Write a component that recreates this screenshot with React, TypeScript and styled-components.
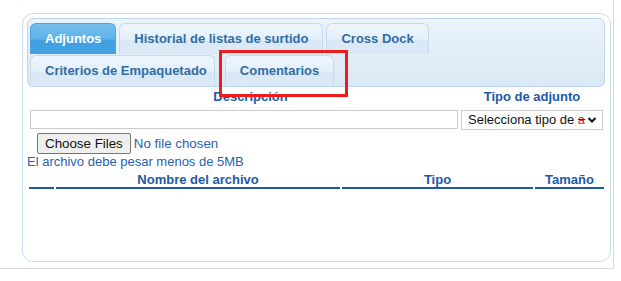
import styled, { createGlobalStyle } from 'styled-components';

const GlobalStyle = createGlobalStyle`
  body {
    margin: 0;
    font-family: 'Liberation Sans', Arial, sans-serif;
    background: #ffffff;
  }
`;

const Page = styled.div`
  position: relative;
  box-sizing: border-box;
  width: 614px;
  height: 269px;
  padding: 13px 2px 0 22px;
  border-right: 1px solid #dcdcdc;
  border-bottom: 1px solid #dcdcdc;
`;

const Panel = styled.div`
  box-sizing: border-box;
  height: 249px;
  padding: 4px 5px 4px 4px;
  border: 1px solid #c9ddf1;
  border-radius: 11px;
  background: #ffffff;
`;

const TabNav = styled.ul`
  display: flex;
  flex-wrap: wrap;
  margin: 0;
  padding: 3px 2px 0;
  list-style: none;
  border: 1px solid #bcd6ed;
  border-radius: 6px;
  background: linear-gradient(#ebf3fb, #dae8f5);
`;

const Tab = styled.li<{ $active?: boolean; $gap: number; $padRight: number }>`
  box-sizing: border-box;
  height: 31px;
  margin: 1px ${(p) => p.$gap}px 0 0;
  padding: 0 ${(p) => p.$padRight}px 0 14px;
  line-height: 30px;
  font-size: 13px;
  font-weight: bold;
  white-space: nowrap;
  border: 1px solid ${(p) => (p.$active ? '#4aa3e2' : '#c5dbec')};
  border-bottom: 0;
  border-radius: 6px 6px 0 0;
  color: ${(p) => (p.$active ? '#ffffff' : '#2f6ea5')};
  background: ${(p) =>
    p.$active
      ? 'linear-gradient(#74c0ee 0%, #5cb2ea 50%, #3f9fe0 55%, #43a3e2 100%)'
      : 'linear-gradient(#eef5fc 0%, #e6f0fa 50%, #dae8f5 55%, #dce9f5 100%)'};
`;

const Body = styled.div`
  padding: 0 2px 0 0;
`;

const FieldGrid = styled.div<{ $top: number }>`
  display: grid;
  grid-template-columns: 428px 142px;
  column-gap: 3px;
  margin: ${(p) => p.$top}px 0 0 3px;
`;

const FieldLabel = styled.div<{ $shift?: number }>`
  padding-left: ${(p) => p.$shift ?? 0}px;
  text-align: center;
  font-size: 13px;
  font-weight: bold;
  line-height: 16px;
  color: #1d5aa5;
`;

const TextInput = styled.input`
  box-sizing: border-box;
  width: 428px;
  height: 19px;
  margin: 0;
  padding: 0 4px;
  border: 1px solid #cccccc;
  font: 13px 'Liberation Sans', Arial, sans-serif;
`;

const SelectBox = styled.div`
  box-sizing: border-box;
  display: flex;
  align-items: center;
  height: 20px;
  padding: 0 5px 0 6px;
  border: 1px solid #cccccc;
  background: #ffffff;
  font-size: 13px;
  color: #111111;
`;

const SelectText = styled.span`
  flex: 1;
  white-space: pre;
  line-height: 18px;
`;

const Mark = styled.span`
  color: #e02424;
  text-decoration: line-through;
  text-decoration-color: #333333;
`;

const FileRow = styled.div`
  margin: 3px 0 0 10px;
`;

const FileInput = styled.input`
  font: 13.33px 'Liberation Sans', Arial, sans-serif;
  color: #2a5fae;

  &::file-selector-button {
    box-sizing: border-box;
    height: 21px;
    margin-right: 3px;
    padding: 0 7px;
    font: 13.33px 'Liberation Sans', Arial, sans-serif;
    color: #111111;
    background: #efefef;
    border: 1px solid #767676;
    border-radius: 2px;
  }
`;

const Note = styled.div`
  font-size: 13px;
  line-height: 15px;
  color: #2a5fae;
`;

const FileTable = styled.div`
  display: grid;
  grid-template-columns: 25px 284px 191px 69px;
  column-gap: 2px;
  margin-left: 2px;
`;

const HeadCell = styled.div`
  padding: 3px 0 0;
  height: 15px;
  line-height: 15px;
  text-align: center;
  font-size: 13px;
  font-weight: bold;
  color: #1d5aa5;
  border-bottom: 2px solid #1e5b9e;
`;

const Highlight = styled.div`
  position: absolute;
  left: 219px;
  top: 50px;
  width: 129px;
  height: 47px;
  box-sizing: border-box;
  border: 3px solid #ee1c1c;
  pointer-events: none;
`;

const Chevron = () => (
  <svg width="10" height="8" viewBox="0 0 10 8">
    <path d="M1.5 2 L5 5.5 L8.5 2" fill="none" stroke="#111" strokeWidth="2" />
  </svg>
);

const tabs = [
  { title: 'Adjuntos', active: true, gap: 3, padRight: 14 },
  { title: 'Historial de listas de surtido', gap: 3, padRight: 14 },
  { title: 'Cross Dock', gap: 3, padRight: 14 },
  { title: 'Criterios de Empaquetado', gap: 10, padRight: 7 },
  { title: 'Comentarios', gap: 3, padRight: 14 },
];

const columns = ['', 'Nombre del archivo', 'Tipo', 'Tamaño'];

export default function App() {
  return (
    <>
      <GlobalStyle />
      <Page>
        <Panel>
          <TabNav>
            {tabs.map((t) => (
              <Tab key={t.title} $active={t.active} $gap={t.gap} $padRight={t.padRight}>
                {t.title}
              </Tab>
            ))}
          </TabNav>
          <Body>
            <FieldGrid $top={2}>
              <FieldLabel $shift={13}>Descripción</FieldLabel>
              <FieldLabel>Tipo de adjunto</FieldLabel>
            </FieldGrid>
            <FieldGrid $top={5}>
              <TextInput type="text" />
              <SelectBox>
                <SelectText>
                  {'Selecciona tipo de '}
                  <Mark>a</Mark>
                </SelectText>
                <Chevron />
              </SelectBox>
            </FieldGrid>
            <FileRow>
              <FileInput type="file" multiple />
            </FileRow>
            <Note>El archivo debe pesar menos de 5MB</Note>
            <FileTable>
              {columns.map((c, i) => (
                <HeadCell key={i}>{c}</HeadCell>
              ))}
            </FileTable>
          </Body>
        </Panel>
        <Highlight />
      </Page>
    </>
  );
}
